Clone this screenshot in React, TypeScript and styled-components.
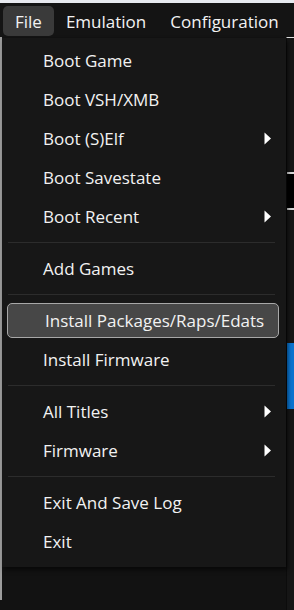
import styled, { createGlobalStyle } from 'styled-components';

const GlobalStyle = createGlobalStyle`
  html, body {
    margin: 0;
    padding: 0;
    background: #121212;
  }
  * {
    box-sizing: border-box;
  }
`;

type Entry =
  | { kind: 'item'; label: string; submenu?: boolean; active?: boolean }
  | { kind: 'separator' };

const entries: Entry[] = [
  { kind: 'item', label: 'Boot Game' },
  { kind: 'item', label: 'Boot VSH/XMB' },
  { kind: 'item', label: 'Boot (S)Elf', submenu: true },
  { kind: 'item', label: 'Boot Savestate' },
  { kind: 'item', label: 'Boot Recent', submenu: true },
  { kind: 'separator' },
  { kind: 'item', label: 'Add Games' },
  { kind: 'separator' },
  { kind: 'item', label: 'Install Packages/Raps/Edats', active: true },
  { kind: 'item', label: 'Install Firmware' },
  { kind: 'separator' },
  { kind: 'item', label: 'All Titles', submenu: true },
  { kind: 'item', label: 'Firmware', submenu: true },
  { kind: 'separator' },
  { kind: 'item', label: 'Exit And Save Log' },
  { kind: 'item', label: 'Exit' },
];

const Window = styled.div`
  position: relative;
  width: 294px;
  height: 610px;
  overflow: hidden;
  background: #121212;
  font-family: 'Open Sans', 'Noto Sans', sans-serif;
  color: #f2f2f2;
  display: flex;
  flex-direction: column;
`;

const TitleEdge = styled.div`
  height: 3px;
  background: #e7e9ef;
  flex-shrink: 0;
`;

const MenuBar = styled.div`
  height: 34px;
  display: flex;
  align-items: center;
  padding-left: 3px;
  background: #141414;
  flex-shrink: 0;
`;

const BarItem = styled.div<{ $open?: boolean }>`
  height: 30px;
  margin-top: 2px;
  padding: 0 12px;
  display: flex;
  align-items: center;
  border-radius: 5px;
  font-size: 17px;
  white-space: nowrap;
  background: ${({ $open }) => ($open ? '#3a3a3a' : 'transparent')};
`;

const Workspace = styled.div`
  flex: 1;
  display: flex;
`;

const Gutter = styled.div`
  width: 2px;
  height: 563px;
  background: #9c9c9c;
`;

const Main = styled.div`
  flex: 1;
`;

const SidePanel = styled.div`
  width: 8px;
  display: flex;
  flex-direction: column;
  border-top: 1px solid #e0e0e0;
  border-left: 1px solid #0c0c0c;
  background: #161616;
`;

const DarkBox = styled.div`
  margin-top: 134px;
  height: 38px;
  background: #000;
  border-top: 2px solid #d8d8d8;
  border-bottom: 2px solid #d8d8d8;
`;

const BlueBar = styled.div`
  margin-top: 133px;
  height: 66px;
  background: #0a74d0;
`;

const Dropdown = styled.div`
  position: absolute;
  left: 2px;
  top: 38px;
  width: 284px;
  padding: 3px 0 6px;
  background: #171717;
  box-shadow: 2px 3px 4px rgba(0, 0, 0, 0.55);
  display: flex;
  flex-direction: column;
`;

const Item = styled.div<{ $active?: boolean }>`
  height: 39px;
  margin: ${({ $active }) => ($active ? '2px 7px 2px 5px' : '0')};
  padding-left: ${({ $active }) => ($active ? '37px' : '41px')};
  padding-right: 14px;
  display: flex;
  align-items: center;
  justify-content: space-between;
  font-size: 17px;
  white-space: nowrap;
  ${({ $active }) =>
    $active &&
    `
    height: 35px;
    background: #474747;
    border: 1px solid #a8a8a8;
    border-radius: 5px;
  `}
`;

const Separator = styled.div`
  height: 1px;
  margin: 6px 11px 6px 6px;
  background: #2c2c2c;
`;

const Arrow = () => (
  <svg width="8" height="13" viewBox="0 0 8 13">
    <path d="M0.5 0.5 L7 6.5 L0.5 12.5 Z" fill="#ffffff" />
  </svg>
);

export default function App() {
  return (
    <Window>
      <GlobalStyle />
      <TitleEdge />
      <MenuBar>
        <BarItem $open>File</BarItem>
        <BarItem>Emulation</BarItem>
        <BarItem>Configuration</BarItem>
      </MenuBar>
      <Workspace>
        <Gutter />
        <Main />
        <SidePanel>
          <DarkBox />
          <BlueBar />
        </SidePanel>
      </Workspace>
      <Dropdown>
        {entries.map((entry, index) =>
          entry.kind === 'separator' ? (
            <Separator key={index} />
          ) : (
            <Item key={index} $active={entry.active}>
              <span>{entry.label}</span>
              {entry.submenu && <Arrow />}
            </Item>
          )
        )}
      </Dropdown>
    </Window>
  );
}
